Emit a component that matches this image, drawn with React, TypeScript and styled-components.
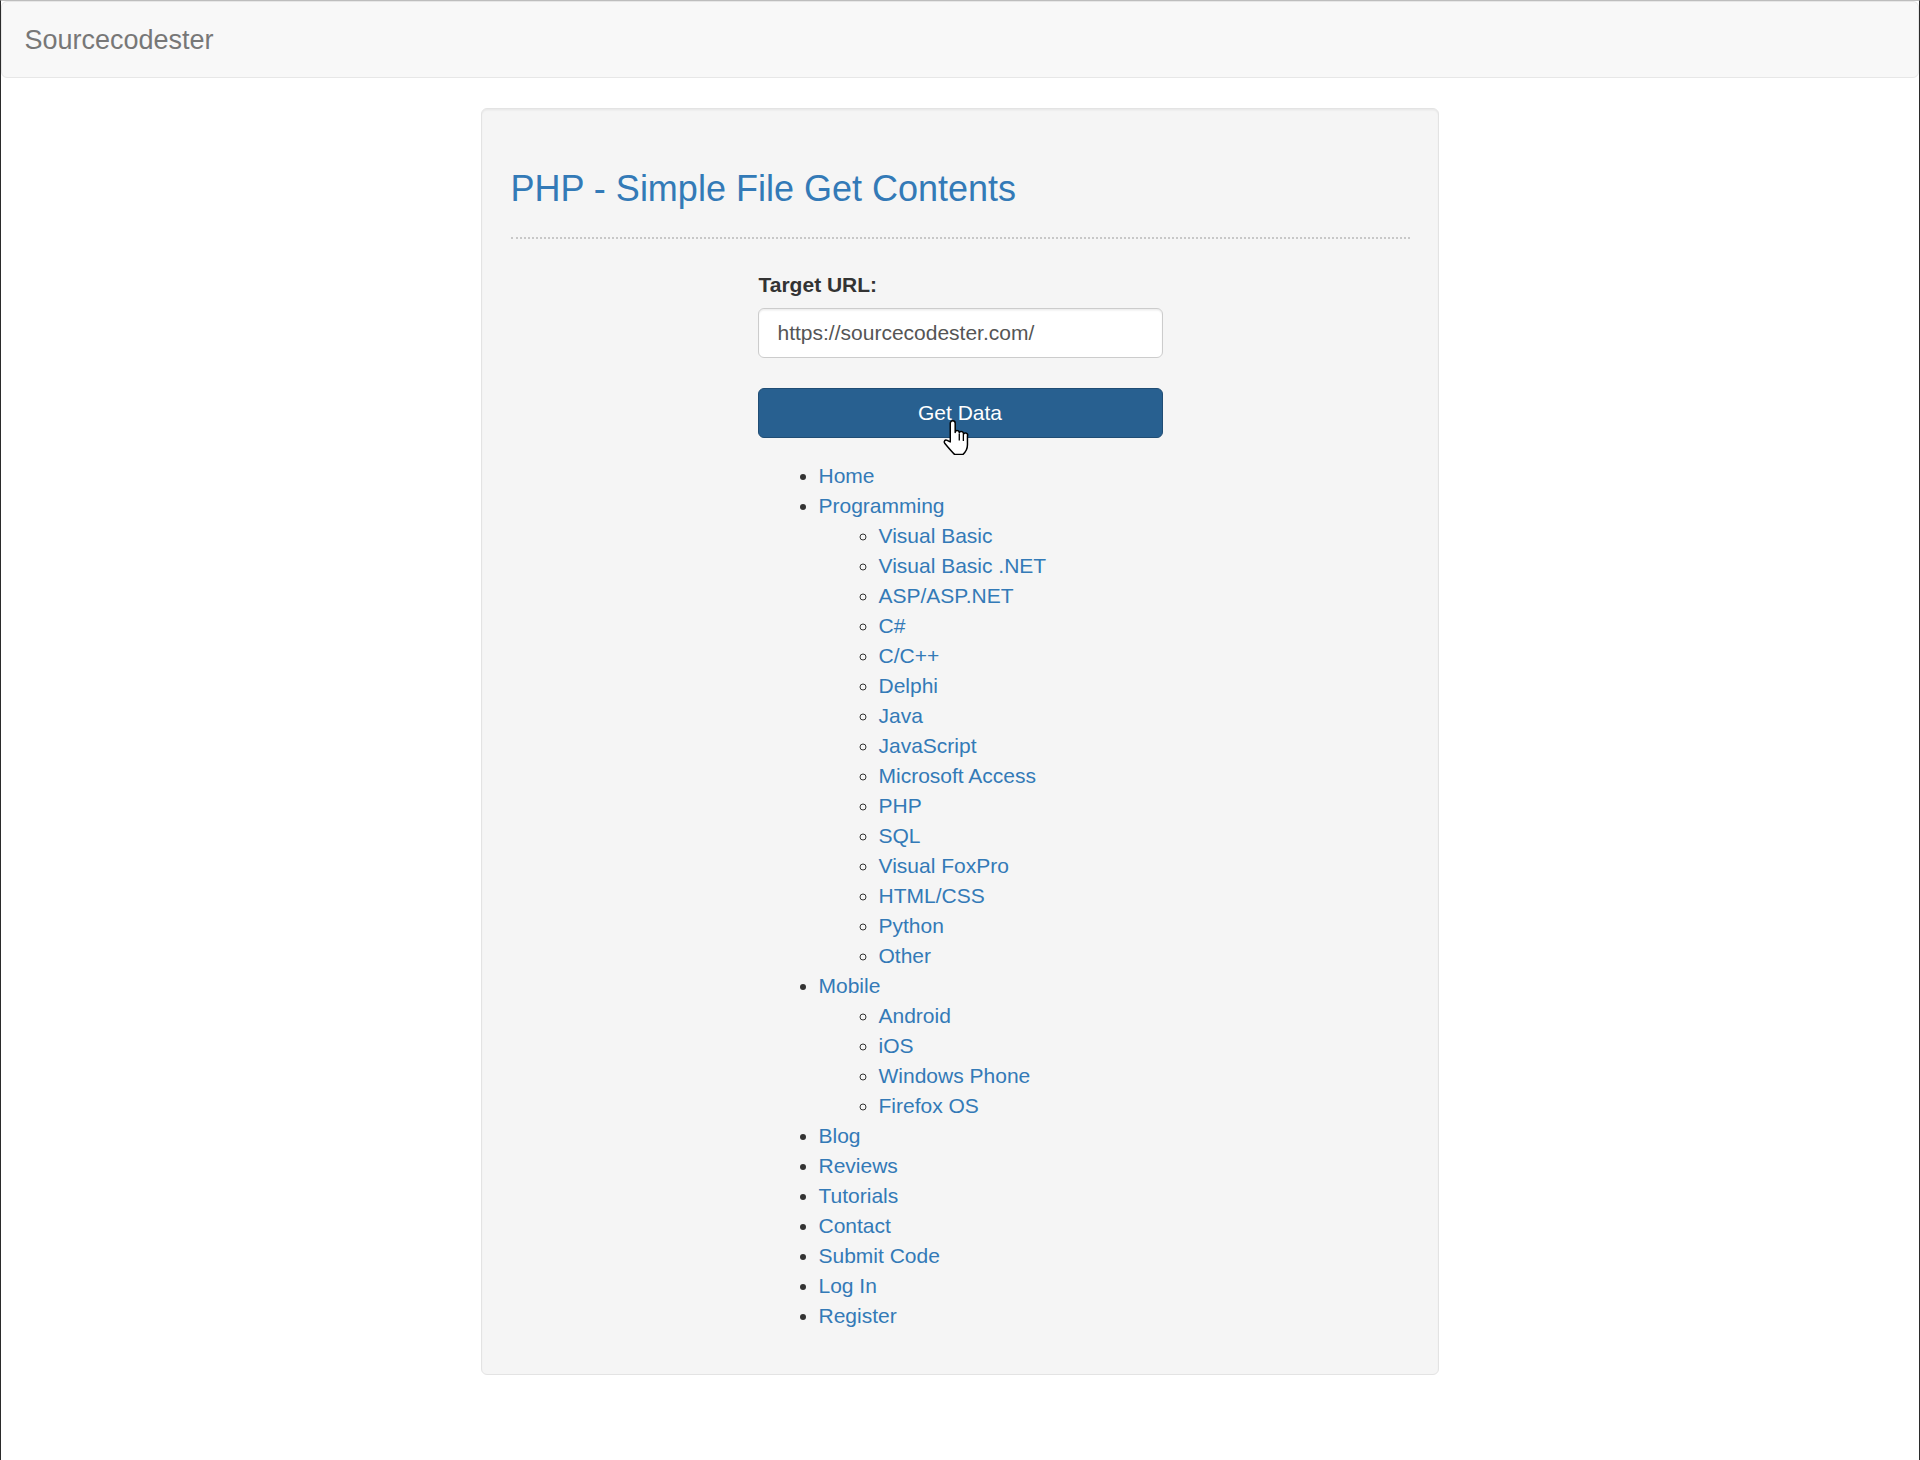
import styled, { createGlobalStyle } from 'styled-components'

type MenuItem = {
  label: string
  children?: string[]
}

const menu: MenuItem[] = [
  { label: 'Home' },
  {
    label: 'Programming',
    children: [
      'Visual Basic',
      'Visual Basic .NET',
      'ASP/ASP.NET',
      'C#',
      'C/C++',
      'Delphi',
      'Java',
      'JavaScript',
      'Microsoft Access',
      'PHP',
      'SQL',
      'Visual FoxPro',
      'HTML/CSS',
      'Python',
      'Other',
    ],
  },
  {
    label: 'Mobile',
    children: ['Android', 'iOS', 'Windows Phone', 'Firefox OS'],
  },
  { label: 'Blog' },
  { label: 'Reviews' },
  { label: 'Tutorials' },
  { label: 'Contact' },
  { label: 'Submit Code' },
  { label: 'Log In' },
  { label: 'Register' },
]

const GlobalStyle = createGlobalStyle`
  html, body {
    margin: 0;
    padding: 0;
    background: #ffffff;
  }
  body {
    font-family: 'Liberation Sans', Arial, Helvetica, sans-serif;
    font-size: 21px;
    line-height: 30px;
    color: #333333;
  }
  * {
    box-sizing: border-box;
  }
`

const Frame = styled.div`
  min-height: 1460px;
  border-top: 1px solid #bdbdbd;
  border-left: 1px solid #2b2b2b;
  border-right: 1px solid #2b2b2b;
`

const Navbar = styled.nav`
  display: flex;
  align-items: center;
  height: 76.5px;
  margin: 0 0 30px;
  padding: 1.5px 22.5px 0;
  background: #f8f8f8;
  border: 1.5px solid #e7e7e7;
  border-radius: 6px;
`

const Brand = styled.a`
  font-size: 27px;
  line-height: 30px;
  color: #777777;
  text-decoration: none;
`

const Well = styled.section`
  width: 958px;
  margin: 0 auto;
  padding: 28.5px;
  background: #f5f5f5;
  border: 1.5px solid #e3e3e3;
  border-radius: 6px;
  box-shadow: inset 0 1.5px 1.5px rgba(0, 0, 0, 0.05);
`

const Title = styled.h3`
  margin: 31.5px 0 0;
  font-size: 36px;
  font-weight: 500;
  line-height: 39.6px;
  color: #337ab7;
`

const Rule = styled.hr`
  margin: 29px 0 30px;
  height: 0;
  border: 0;
  border-top: 2px dotted #c8c8c8;
`

const FormColumn = styled.div`
  width: 405px;
  margin: 0 auto;
`

const Label = styled.label`
  display: inline-block;
  margin-bottom: 7.5px;
  padding: 1px 0 0 1px;
  font-weight: bold;
  line-height: 30px;
`

const UrlInput = styled.input`
  display: block;
  width: 100%;
  height: 50px;
  margin: 0 0 30px;
  padding: 9px 18px 9px 19px;
  font-family: inherit;
  font-size: 21px;
  color: #555555;
  background: #ffffff;
  border: 1.5px solid #cccccc;
  border-radius: 6px;
  box-shadow: inset 0 1.5px 1.5px rgba(0, 0, 0, 0.075);
  outline: none;
`

const ButtonWrap = styled.div`
  position: relative;
  margin-bottom: 23px;
`

const SubmitButton = styled.button`
  display: block;
  width: 100%;
  height: 50px;
  padding: 0;
  font-family: inherit;
  font-size: 21px;
  color: #ffffff;
  background: #286090;
  border: 1.5px solid #204d74;
  border-radius: 6px;
`

const Pointer = styled.svg`
  position: absolute;
  left: 184px;
  top: 32px;
  width: 28px;
  height: 36px;
  pointer-events: none;
`

const List = styled.ul<{ $nested?: boolean }>`
  margin: ${({ $nested }) => ($nested ? '0' : '0 0 15px')};
  padding-left: ${({ $nested }) => ($nested ? '60px' : '61px')};
  list-style-type: ${({ $nested }) => ($nested ? 'circle' : 'disc')};
  line-height: 30px;
`

const Link = styled.a`
  color: #337ab7;
  text-decoration: none;
`

const HandCursor = () => (
  <Pointer viewBox="0 0 17 22">
    <path
      d="M5 13.4 L5 2 A1.5 1.5 0 0 1 8 2 L8 7.6 A1.25 1.25 0 0 1 10.5 7.9 A1.25 1.25 0 0 1 13 8.8 A1.25 1.25 0 0 1 15.5 9.8 L15.5 15.2 C15.5 17.8 14.4 19.6 12.8 21 L7.6 21 C6 19.4 3.4 16.4 1.6 14.2 C0.8 13.2 1.8 11.7 3.1 12.4 Z"
      fill="#ffffff"
      stroke="#000000"
      strokeWidth="0.9"
      strokeLinejoin="round"
    />
    <path d="M10.5 8.4 V12.6 M13 9.2 V12.8" stroke="#000000" strokeWidth="0.8" />
  </Pointer>
)

const App = () => {
  return (
    <>
      <GlobalStyle />
      <Frame>
        <Navbar>
          <Brand>Sourcecodester</Brand>
        </Navbar>
        <Well>
          <Title>PHP - Simple File Get Contents</Title>
          <Rule />
          <FormColumn>
            <Label>Target URL:</Label>
            <UrlInput type="text" defaultValue="https://sourcecodester.com/" />
            <ButtonWrap>
              <SubmitButton>Get Data</SubmitButton>
              <HandCursor />
            </ButtonWrap>
            <List>
              {menu.map((item) => (
                <li key={item.label}>
                  <Link>{item.label}</Link>
                  {item.children && (
                    <List $nested>
                      {item.children.map((child) => (
                        <li key={child}>
                          <Link>{child}</Link>
                        </li>
                      ))}
                    </List>
                  )}
                </li>
              ))}
            </List>
          </FormColumn>
        </Well>
      </Frame>
    </>
  )
}

export default App
